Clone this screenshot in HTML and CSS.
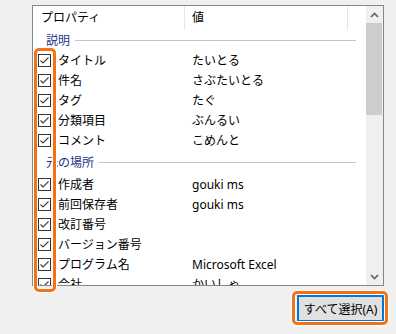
FILE: index.html
```html
<!DOCTYPE html>
<html lang="ja">
<head>
    <meta charset="UTF-8">
    <title>詳細</title>
    <link rel="stylesheet" href="styles.css">
</head>
<body>
    <div class="page">
        <div class="listbox">
            <div class="list">
                <div class="list-head">
                    <div class="head-cell">プロパティ</div>
                    <div class="head-cell">値</div>
                </div>

                <div class="group group-first"><span>説明</span></div>
                <div class="row"><span class="check"></span><span class="name">タイトル</span><span class="value">たいとる</span></div>
                <div class="row"><span class="check"></span><span class="name">件名</span><span class="value">さぶたいとる</span></div>
                <div class="row"><span class="check"></span><span class="name">タグ</span><span class="value">たぐ</span></div>
                <div class="row"><span class="check"></span><span class="name">分類項目</span><span class="value">ぶんるい</span></div>
                <div class="row"><span class="check"></span><span class="name">コメント</span><span class="value">こめんと</span></div>

                <div class="group"><span>元の場所</span></div>
                <div class="row"><span class="check"></span><span class="name">作成者</span><span class="value">gouki ms</span></div>
                <div class="row"><span class="check"></span><span class="name">前回保存者</span><span class="value">gouki ms</span></div>
                <div class="row"><span class="check"></span><span class="name">改訂番号</span><span class="value"></span></div>
                <div class="row"><span class="check"></span><span class="name">バージョン番号</span><span class="value"></span></div>
                <div class="row"><span class="check"></span><span class="name">プログラム名</span><span class="value">Microsoft Excel</span></div>
                <div class="row"><span class="check"></span><span class="name">会社</span><span class="value">かいしゃ</span></div>
            </div>

            <div class="scrollbar">
                <div class="arrow">
                    <svg width="9" height="6" viewBox="0 0 9 6"><polyline points="1,5 4.5,1.5 8,5" fill="none" stroke="#606060" stroke-width="1.6"/></svg>
                </div>
                <div class="track"><div class="thumb"></div></div>
                <div class="arrow">
                    <svg width="9" height="6" viewBox="0 0 9 6"><polyline points="1,1 4.5,4.5 8,1" fill="none" stroke="#606060" stroke-width="1.6"/></svg>
                </div>
            </div>
        </div>

        <div class="actions">
            <button class="btn">すべて選択(A)</button>
        </div>

        <!-- 注釈の枠 -->
        <div class="mark mark-checks"></div>
        <div class="mark mark-button"></div>
    </div>
</body>
</html>
```

FILE: styles.css
```css
* {
    box-sizing: border-box;
    margin: 0;
    padding: 0;
}

body {
    background: #f0f0f0;
    font-family: "Noto Sans", "Noto Sans CJK JP", sans-serif;
    font-size: 12px;
    color: #000;
}

.page {
    position: relative;
    padding: 5px 0 0 32px;
    width: 396px;
    height: 334px;
}

.listbox {
    display: flex;
    width: 352px;
    height: 281px;
    border: 1px solid #828790;
    background: #fff;
    overflow: hidden;
}

.list {
    flex: 1;
    overflow: hidden;
}

.list-head {
    display: grid;
    grid-template-columns: 152px 163px;
    height: 24px;
}

.head-cell {
    display: flex;
    align-items: center;
    padding-left: 8px;
    border-right: 1px solid #e5e5e5;
    padding-bottom: 3px;
}

.head-cell + .head-cell {
    padding-left: 7px;
}

.group {
    display: flex;
    align-items: center;
    height: 24px;
    padding: 0 10px 0 13px;
    color: #1e3287;
}

.group-first {
    height: 20px;
}

.group::after {
    content: "";
    flex: 1;
    height: 1px;
    margin-left: 5px;
    background: #b9c4dd;
}

.row {
    display: grid;
    grid-template-columns: 19px 133px 1fr;
    align-items: center;
    height: 20px;
    white-space: nowrap;
}

.check {
    width: 13px;
    height: 13px;
    margin-left: 5px;
    border: 1px solid #333;
    background: #fff no-repeat center;
    background-image: url("data:image/svg+xml,%3Csvg xmlns='http://www.w3.org/2000/svg' width='11' height='11' viewBox='0 0 11 11'%3E%3Cpolyline points='1.5,5.5 4,8 9.5,2.5' fill='none' stroke='%23444' stroke-width='1.2'/%3E%3C/svg%3E");
}

.name {
    padding-left: 6px;
}

.value {
    padding-left: 7px;
}

.scrollbar {
    display: flex;
    flex-direction: column;
    width: 17px;
    background: #f0f0f0;
}

.arrow {
    display: flex;
    align-items: center;
    justify-content: center;
    height: 17px;
}

.track {
    flex: 1;
}

.thumb {
    width: 16px;
    height: 92px;
    background: #cdcdcd;
}

.actions {
    display: flex;
    justify-content: flex-end;
    width: 352px;
    margin-top: 9px;
}

.btn {
    width: 87px;
    height: 27px;
    border: 2px solid #0078d7;
    background: #e1e1e1;
    font-family: inherit;
    font-size: 12px;
    color: #000;
}

.mark {
    position: absolute;
    border: 3px solid #f47216;
    border-radius: 5px;
    box-shadow: 0 0 0 1px #fff, inset 0 0 0 1px #fff;
}

.mark-checks {
    left: 34px;
    top: 48px;
    width: 22px;
    height: 244px;
}

.mark-button {
    left: 292px;
    top: 291px;
    width: 96px;
    height: 34px;
}
```
